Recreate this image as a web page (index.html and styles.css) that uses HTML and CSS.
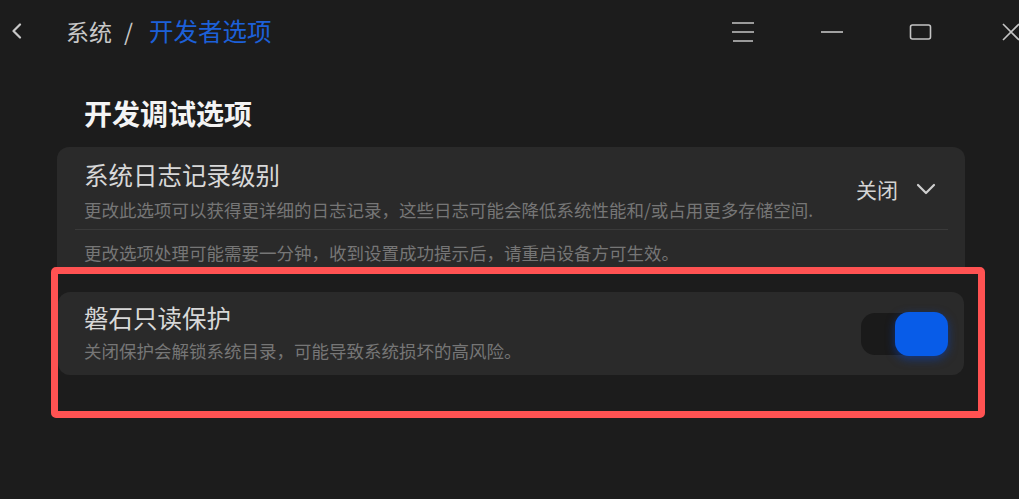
FILE: index.html
```html
<!DOCTYPE html>
<html lang="zh-CN">
<head>
    <meta charset="UTF-8">
    <meta name="viewport" content="width=device-width, initial-scale=1.0">
    <title>开发者选项</title>
    <link rel="stylesheet" href="styles.css">
</head>
<body>
    <div class="titlebar">
        <button class="back-btn" aria-label="返回">
            <svg width="12" height="16" viewBox="0 0 12 16"><path d="M9 1.5 L2.5 8 L9 14.5" fill="none" stroke="#c8c8c8" stroke-width="2.2" stroke-linecap="round" stroke-linejoin="round"/></svg>
        </button>
        <div class="crumbs">
            <span class="crumb">系统</span>
            <span class="crumb-sep">/</span>
            <span class="crumb current">开发者选项</span>
        </div>
        <div class="win-controls">
            <span class="win-btn">
                <svg width="24" height="22" viewBox="0 0 24 22"><path d="M1 2 H23 M1 11 H23 M2 20 H22" stroke="#c4c4c4" stroke-width="1.6"/></svg>
            </span>
            <span class="win-btn">
                <svg width="24" height="4" viewBox="0 0 24 4"><path d="M1 2 H23" stroke="#c4c4c4" stroke-width="1.6"/></svg>
            </span>
            <span class="win-btn">
                <svg width="24" height="17" viewBox="0 0 24 17"><rect x="1.5" y="1" width="20" height="14" rx="2" fill="none" stroke="#c4c4c4" stroke-width="1.6"/></svg>
            </span>
            <span class="win-btn close">
                <svg width="20" height="18" viewBox="0 0 20 18"><path d="M2 1 L18 17 M18 1 L2 17" stroke="#c4c4c4" stroke-width="1.6"/></svg>
            </span>
        </div>
    </div>

    <main class="content">
        <h1 class="section-title">开发调试选项</h1>

        <div class="card log-card">
            <div class="row">
                <div class="row-text">
                    <div class="row-title">系统日志记录级别</div>
                    <div class="row-desc">更改此选项可以获得更详细的日志记录，这些日志可能会降低系统性能和/或占用更多存储空间.</div>
                </div>
                <div class="select">
                    <span>关闭</span>
                    <svg width="20" height="12" viewBox="0 0 20 12"><path d="M2 2 L10 10 L18 2" fill="none" stroke="#cfcfcf" stroke-width="2.2" stroke-linecap="round" stroke-linejoin="round"/></svg>
                </div>
            </div>
            <div class="divider"></div>
            <div class="row-note">更改选项处理可能需要一分钟，收到设置成功提示后，请重启设备方可生效。</div>
        </div>

        <div class="highlight">
            <div class="card protect-card">
                <div class="row-text">
                    <div class="row-title">磐石只读保护</div>
                    <div class="row-desc">关闭保护会解锁系统目录，可能导致系统损坏的高风险。</div>
                </div>
                <div class="toggle on">
                    <span class="knob"></span>
                </div>
            </div>
        </div>
    </main>
</body>
</html>
```

FILE: styles.css
```css
body {
    margin: 0;
    background-color: #1c1c1c;
    font-family: "Noto Sans CJK SC", "Noto Sans", sans-serif;
    color: #d6d6d6;
    height: 499px;
    overflow: hidden;
}

.titlebar {
    height: 62px;
    padding-bottom: 2px;
    display: flex;
    align-items: center;
}

.back-btn {
    background: none;
    border: none;
    padding: 0;
    margin-left: 11px;
    width: 14px;
    height: 18px;
    display: flex;
    align-items: center;
    cursor: pointer;
}

.crumbs {
    margin-left: 41px;
    display: flex;
    align-items: center;
    font-size: 23px;
    line-height: 32px;
    color: #c8c8c8;
}

.crumb-sep {
    margin: 0 16px 0 12px;
}

.crumb.current {
    font-size: 24.5px;
    color: #1c60d8;
}

.win-controls {
    margin-left: auto;
    display: flex;
    align-items: center;
    margin-top: 2px;
}

.win-btn {
    display: flex;
    align-items: center;
    justify-content: center;
    width: 24px;
    margin-left: 65px;
}

.win-btn:first-child {
    margin-left: 0;
}

.win-btn.close {
    width: 20px;
    margin-left: 68px;
    margin-right: -2px;
}

.content {
    padding: 0 54px 0 57px;
}

.section-title {
    margin: 30px 0 15px 27px;
    font-size: 28px;
    line-height: 38px;
    font-weight: 600;
    color: #f4f4f4;
}

.card {
    background-color: #2a2a2a;
    border-radius: 12px;
}

.log-card {
    height: 120px;
    box-sizing: border-box;
    padding-top: 12px;
    border-radius: 12px 12px 0 0;
}

.row {
    display: flex;
    align-items: center;
    padding: 0 29px 0 27px;
}

.row-text {
    flex: 1;
}

.row-title {
    font-size: 24.5px;
    line-height: 32px;
    color: #d8d8d8;
}

.row-desc {
    margin-top: 7px;
    font-size: 17.5px;
    line-height: 24px;
    color: #767676;
}

.select {
    display: flex;
    align-items: center;
    gap: 18px;
    font-size: 21px;
    color: #d4d4d4;
    margin-top: -4px;
}

.divider {
    height: 1px;
    background-color: #3a3a3a;
    margin: 7px 17px 0 18px;
}

.row-note {
    margin-top: 11px;
    padding-left: 27px;
    font-size: 17.5px;
    line-height: 24px;
    color: #767676;
}

.highlight {
    margin: 0 -20px 0 -6px;
    border: 7px solid #ff5252;
    border-radius: 5px;
    padding: 18px 14px 36px 0;
}

.protect-card {
    height: 83px;
    box-sizing: border-box;
    display: flex;
    align-items: center;
    padding: 0 16px 0 26px;
    border-radius: 12px;
}

.protect-card .row-desc {
    margin-top: 5px;
}

.protect-card .row-text {
    margin-top: -2px;
}

.toggle {
    width: 87px;
    height: 42px;
    border-radius: 14px;
    background-color: #1a1a1a;
    display: flex;
    align-items: center;
    justify-content: flex-end;
}

.knob {
    width: 53px;
    height: 44px;
    border-radius: 14px;
    background-color: #085ce8;
    box-shadow: 0 3px 10px rgba(8, 70, 200, 0.55);
}
```
